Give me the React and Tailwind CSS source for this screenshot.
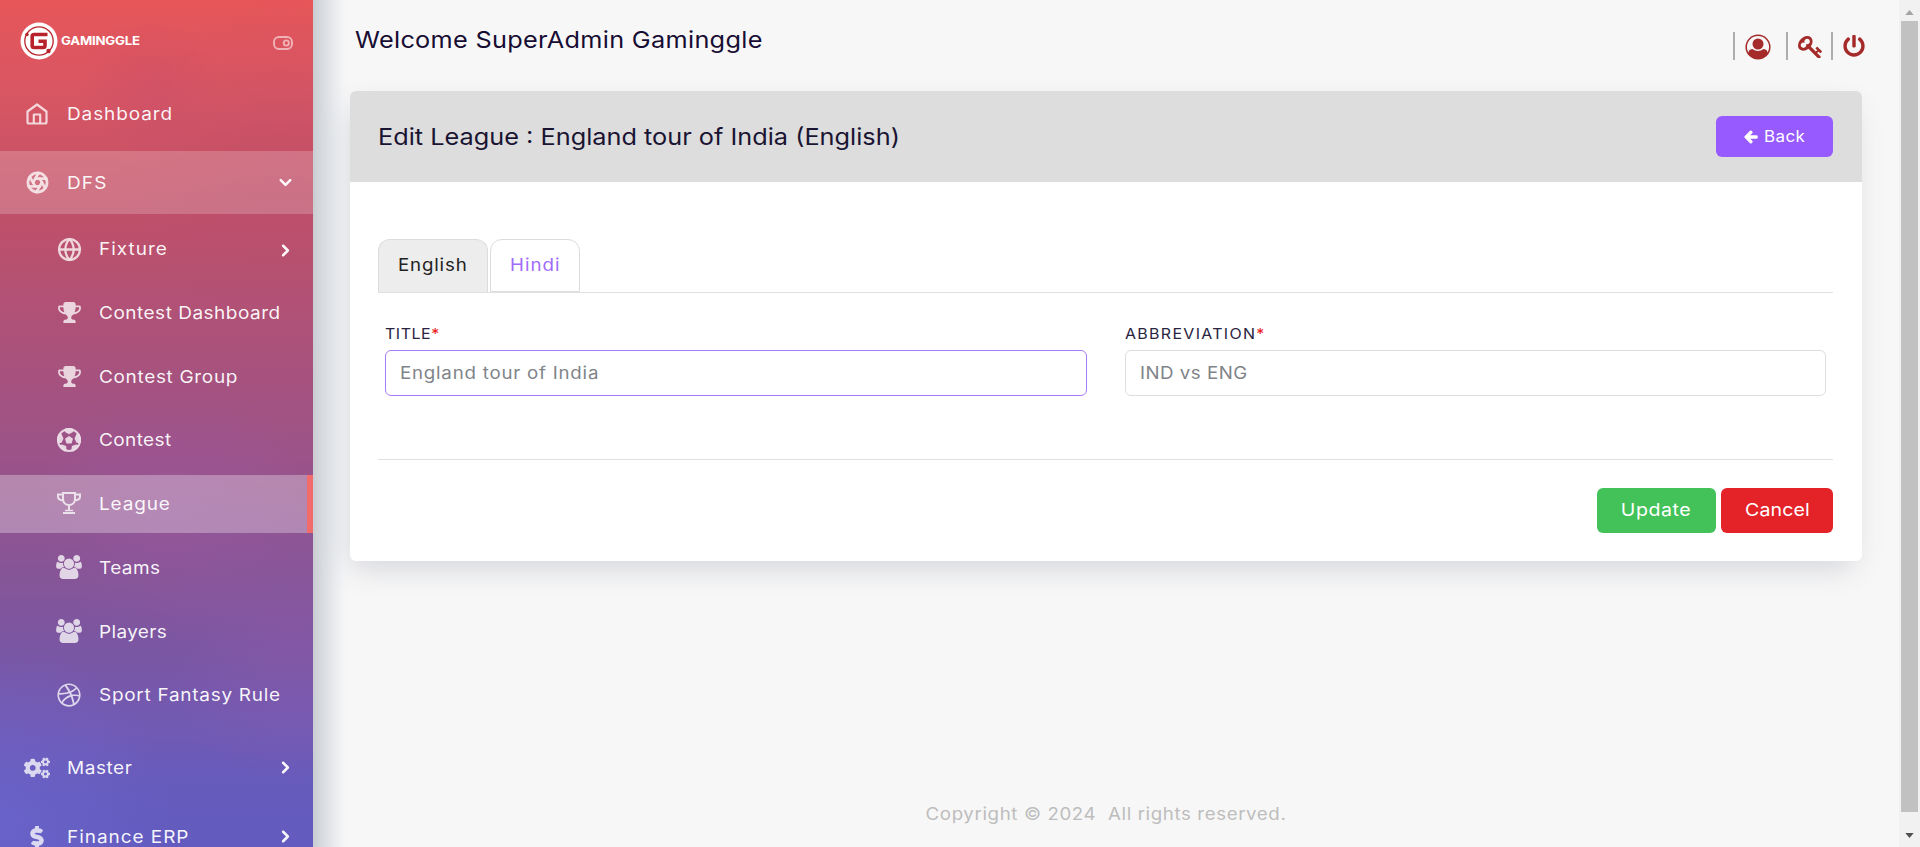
import React from "react";
import { FiAperture, FiGlobe, FiChevronDown, FiChevronRight } from "react-icons/fi";
import { FaCogs, FaDollarSign, FaDribbble, FaPowerOff, FaArrowLeft } from "react-icons/fa";

const wide = "inline-block origin-left scale-x-110 whitespace-nowrap";

function Glyph({ d, box, className }) {
  return (
    <svg viewBox={box} className={className} fill="currentColor">
      <g transform="scale(1,-1)">
        <path d={d} />
      </g>
    </svg>
  );
}

const USERS =
  "M593 640q-162 -5 -265 -128h-134q-82 0 -138 40.5t-56 118.5q0 353 124 353q6 0 43.5 -21t97.5 -42.5t119 -21.5q67 0 133 23q-5 -37 -5 -66q0 -139 81 -256zM1664 3q0 -120 -73 -189.5t-194 -69.5h-874q-121 0 -194 69.5t-73 189.5q0 53 3.5 103.5t14 109t26.5 108.5t43 97.5t62 81t85.5 53.5t111.5 20q10 0 43 -21.5t73 -48t107 -48t135 -21.5t135 21.5t107 48t73 48t43 21.5q61 0 111.5 -20t85.5 -53.5t62 -81t43 -97.5t26.5 -108.5t14 -109t3.5 -103.5zM640 1280q0 -106 -75 -181t-181 -75t-181 75t-75 181t75 181t181 75t181 -75t75 -181zM1344 896q0 -159 -112.5 -271.5t-271.5 -112.5t-271.5 112.5t-112.5 271.5t112.5 271.5t271.5 112.5t271.5 -112.5t112.5 -271.5zM1920 671q0 -78 -56 -118.5t-138 -40.5h-134q-103 123 -265 128q81 117 81 256q0 29 -5 66q66 -23 133 -23q59 0 119 21.5t97.5 42.5t43.5 21q124 0 124 -353zM1792 1280q0 -106 -75 -181t-181 -75t-181 75t-75 181t75 181t181 75t181 -75t75 -181z";
const TROPHY =
  "M458 653q-74 162 -74 371h-256v-96q0 -78 94.5 -162t235.5 -113zM1536 928v96h-256q0 -209 -74 -371q141 29 235.5 113t94.5 162zM1664 1056v-128q0 -71 -41.5 -143t-112 -130t-173 -97.5t-215.5 -44.5q-42 -54 -95 -95q-38 -34 -52.5 -72.5t-14.5 -89.5q0 -54 30.5 -91t97.5 -37q75 0 133.5 -45.5t58.5 -114.5v-64q0 -14 -9 -23t-23 -9h-832q-14 0 -23 9t-9 23v64q0 69 58.5 114.5t133.5 45.5q67 0 97.5 37t30.5 91q0 51 -14.5 89.5t-52.5 72.5q-53 41 -95 95q-113 5 -215.5 44.5t-173 97.5t-112 130t-41.5 143v128q0 40 28 68t68 28h288v96q0 66 47 113t113 47h576q66 0 113 -47t47 -113v-96h288q40 0 68 -28t28 -68z";
const KEY =
  "M832 1024q0 80 -56 136t-136 56t-136 -56t-56 -136q0 -42 19 -83q-41 19 -83 19q-80 0 -136 -56t-56 -136t56 -136t136 -56t136 56t56 136q0 42 -19 83q41 -19 83 -19q80 0 136 56t56 136zM1683 320q0 -17 -49 -66t-66 -49q-9 0 -28.5 16t-36.5 33t-38.5 40t-24.5 26l-96 -96l220 -220q28 -28 28 -68q0 -42 -39 -81t-81 -39q-40 0 -68 28l-671 671q-176 -131 -365 -131q-163 0 -265.5 102.5t-102.5 265.5q0 160 95 313t248 248t313 95q163 0 265.5 -102.5t102.5 -265.5q0 -189 -131 -365l355 -355l96 96q-3 3 -26 24.5t-40 38.5t-33 36.5t-16 28.5q0 17 49 66t66 49q13 0 23 -10q6 -6 46 -44.5t82 -79.5t86.5 -86t73 -78t28.5 -41z";

const TrophySolid = () => <Glyph d={TROPHY} box="0 -1408 1664 1536" className="h-[21px] w-[23px]" />;
const Users = () => <Glyph d={USERS} box="0 -1536 1920 1792" className="h-6 w-[26px] -translate-y-px" />;

const TrophyOutline = () => (
  <svg viewBox="0 0 24 22" className="h-[22px] w-6 -translate-y-px" fill="none" stroke="currentColor" strokeWidth="2">
    <path d="M6 1h12v5.500c0 4-2.500 6.500-6 6.500s-6-2.500-6-6.500zM6 2.500H1v2c0 2.200 2 3.800 5.300 4M18 2.500h5v2c0 2.200-2 3.800-5.300 4M12 13v5" />
    <path d="M8 18.500h8" strokeWidth="1.500" />
    <path d="M6 21h12" />
  </svg>
);

const Ball = () => (
  <svg viewBox="0 0 24 24" className="size-6" fill="currentColor">
    <defs>
      <clipPath id="ball">
        <circle cx="12" cy="12" r="12" />
      </clipPath>
    </defs>
    <circle cx="12" cy="12" r="11" fill="none" stroke="currentColor" strokeWidth="2" />
    <path d="M12 8l4 2.800-1.500 4.600h-5L8 10.800z" />
    <g clipPath="url(#ball)">
      <path d="M6.500 0h11l-1.500 4L12 6.200 8 4zM24 5.500v10l-4.500-.7-2-4.200 2-4.600zM0 5.500v10l4.500-.7 2-4.200-2-4.600zM14.300 23l.6-5 4.100-1.500 4 1-5 7zM9.700 23l-.6-5L5 16.500l-4 1 5 7z" />
    </g>
  </svg>
);

const Home = () => (
  <svg viewBox="0 0 22 22" className="size-[22px]" fill="none" stroke="currentColor" strokeWidth="2.200" strokeLinejoin="round">
    <path d="M1.500 8.500L11 1.500l9.500 7V19a1.500 1.500 0 0 1-1.500 1.500H3A1.500 1.500 0 0 1 1.500 19z" />
    <path d="M7.800 20.500v-9h6.400v9" />
  </svg>
);

const subItems = [
  { label: "Fixture", track: "tracking-[0.9px]", icon: <FiGlobe size={25} strokeWidth={2.2} />, more: true },
  { label: "Contest Dashboard", track: "tracking-[0.45px]", icon: <TrophySolid /> },
  { label: "Contest Group", track: "tracking-[0.6px]", icon: <TrophySolid /> },
  { label: "Contest", track: "tracking-[0.34px]", icon: <Ball /> },
  { label: "League", track: "tracking-[0.75px]", icon: <TrophyOutline />, active: true },
  { label: "Teams", track: "tracking-[0.36px]", icon: <Users /> },
  { label: "Players", track: "tracking-[0.3px]", icon: <Users /> },
  { label: "Sport Fantasy Rule", track: "tracking-[0.64px]", icon: <FaDribbble size={24} /> },
];

function TopItem({ icon, label, track, className, arrow }) {
  return (
    <div className={`flex shrink-0 items-center pr-4 pl-[23px] ${className}`}>
      <span className="flex w-7 justify-center opacity-80">{icon}</span>
      <span className={`ml-4 ${wide} ${track}`}>{label}</span>
      <span className="ml-auto flex w-6 justify-center">{arrow}</span>
    </div>
  );
}

function Sidebar() {
  return (
    <aside className="relative z-10 flex h-full w-[313px] shrink-0 flex-col overflow-hidden bg-[radial-gradient(circle_at_48%_10%,rgba(190,70,110,0.25),transparent_9%),radial-gradient(circle_at_90%_19%,rgba(170,70,110,0.2),transparent_22%),radial-gradient(circle_at_55%_60%,rgba(160,90,170,0.3),transparent_25%),radial-gradient(circle_at_95%_76%,rgba(150,90,170,0.3),transparent_20%),radial-gradient(circle_at_0%_97%,rgba(110,105,210,0.5),transparent_20%),linear-gradient(180deg,#e65659_0%,#d85663_11%,#c35067_23%,#b65171_32%,#a7527e_44%,#9b5389_54%,#8a5594_65%,#7b56a2_76%,#715ab4_86%,#645bbd_94%,#635bbf_100%)] text-[17.3px] leading-6 text-white/95">
      <div className="flex h-[81px] shrink-0 items-center pl-5 pr-5">
        <svg viewBox="0 0 38 38" className="size-[38px]">
          <circle cx="19" cy="19" r="18.500" fill="#fff" />
          <circle cx="19" cy="19" r="14.200" fill="none" stroke="#b8232b" strokeWidth="1.300" />
          <circle cx="7" cy="12.500" r="1.700" fill="#b8232b" />
          <circle cx="28.500" cy="29" r="2.200" fill="#b8232b" />
          <path d="M27.500 12.500H14q-1.800 0-1.800 1.800v9.400q0 1.800 1.800 1.800h9.200q1.800 0 1.800-1.800v-4.500h-6.500" fill="none" stroke="#b8232b" strokeWidth="3.600" />
        </svg>
        <span className="ml-[3px] inline-block origin-left scale-x-110 text-[12px] leading-4 font-bold tracking-[-0.2px] text-white">GAMINGGLE</span>
        <svg viewBox="0 0 20 14" className="mt-[5px] ml-auto h-3.5 w-5 opacity-55" fill="none" stroke="#fff" strokeWidth="1.900">
          <rect x="1" y="1" width="18" height="12" rx="5" />
          <circle cx="13.300" cy="7" r="2.600" />
        </svg>
      </div>
      <TopItem className="mt-px h-[63px]" icon={<Home />} label="Dashboard" track="tracking-[0.8px]" />
      <TopItem
        className="mt-[6px] h-[63px] bg-white/20"
        icon={<FiAperture size={23} strokeWidth={2.8} />}
        label="DFS"
        track="tracking-[1px]"
        arrow={<FiChevronDown size={19} strokeWidth={3.2} />}
      />
      <ul className="mt-1.5 flex shrink-0 flex-col gap-[5.75px]">
        {subItems.map((it) => (
          <li
            key={it.label}
            className={`flex h-[58px] items-center pl-[54px] ${it.active ? "border-r-[6px] border-[#f36c6c] bg-white/30" : "pr-4"}`}
          >
            <span className="flex w-[30px] shrink-0 justify-center opacity-80">{it.icon}</span>
            <span className={`ml-[15px] ${wide} ${it.track}`}>{it.label}</span>
            {it.more && (
              <span className="ml-auto flex w-6 justify-center pt-[3px]">
                <FiChevronRight size={19} strokeWidth={3.2} />
              </span>
            )}
          </li>
        ))}
      </ul>
      <TopItem
        className="mt-3 h-[63px]"
        icon={<FaCogs size={26} />}
        label="Master"
        track="tracking-[0.5px]"
        arrow={<FiChevronRight size={19} strokeWidth={3.2} />}
      />
      <TopItem
        className="mt-[6px] h-[63px]"
        icon={<FaDollarSign size={22} stroke="currentColor" strokeWidth={24} />}
        label="Finance ERP"
        track="tracking-[0.86px]"
        arrow={<FiChevronRight size={19} strokeWidth={3.2} />}
      />
    </aside>
  );
}

function Header() {
  return (
    <header className="flex h-[91px] shrink-0 justify-between pr-[34px] pl-[5px]">
      <h1 className={`mt-[26px] text-[23px] leading-7 tracking-[0.26px] text-[#170d33] ${wide}`}>Welcome SuperAdmin Gaminggle</h1>
      <div className="mt-8 flex h-7 items-center text-[#a52a2a]">
        <span className="h-7 w-0.5 bg-[#adadb0]" />
        <svg viewBox="0 0 26 26" className="ml-[10px] mt-px size-[26px]">
          <defs>
            <clipPath id="avatar">
              <circle cx="13" cy="13" r="12" />
            </clipPath>
          </defs>
          <circle cx="13" cy="13" r="11.800" fill="none" stroke="currentColor" strokeWidth="1.500" />
          <circle cx="13" cy="10" r="5.500" fill="currentColor" />
          <path clipPath="url(#avatar)" d="M3 21c0-4 1.500-6 4.500-6 3 2.500 8 2.500 11 0 3 0 4.500 2 4.500 6l-4 5H7z" fill="currentColor" />
        </svg>
        <span className="ml-[15px] h-7 w-0.5 bg-[#adadb0]" />
        <Glyph d={KEY} box="0 -1408 1683 1536" className="mt-0.5 ml-[10px] h-[22px] w-6" />
        <span className="ml-[9px] h-7 w-0.5 bg-[#adadb0]" />
        <FaPowerOff size={22} className="ml-[10px]" />
      </div>
    </header>
  );
}

function Field({ label, labelTrack, value, valueTrack, focused }) {
  return (
    <div className="flex flex-1 flex-col">
      <label className="flex h-6 items-center pt-0.5 text-[14.500px] leading-5 text-[#2a2440]">
        <span className={`${wide} ${labelTrack}`}>
          {label}
          <span className="text-[#e92020]">*</span>
        </span>
      </label>
      <div
        className={`mt-[5px] flex h-[46px] items-center rounded-md border bg-white pt-0.5 pl-3.5 text-[17px] text-[#808488] ${
          focused ? "border-[#ab7bf5]" : "border-[#dcdee0]"
        }`}
      >
        <span className={`${wide} ${valueTrack}`}>{value}</span>
      </div>
    </div>
  );
}

function Card() {
  return (
    <section className="h-[470px] w-[1512px] rounded-md bg-white shadow-[-4px_12px_28px_-6px_rgba(90,97,125,0.24)]">
      <div className="flex h-[91px] items-center justify-between rounded-t-md bg-[#dddddd] pr-[29px] pl-7">
        <h2 className={`text-[23px] leading-7 text-[#1a1433] ${wide}`}>Edit League : England tour of India (English)</h2>
        <button className="flex h-[41px] w-[117px] items-center justify-center rounded-md bg-[#975aff] text-[15.400px] text-white">
          <FaArrowLeft size={14} stroke="currentColor" strokeWidth={40} className="overflow-visible" />
          <span className={`mr-1 ml-1.5 tracking-[0.4px] ${wide}`}>Back</span>
        </button>
      </div>
      <div className="pt-[57px] pr-[29px] pl-7">
        <div className="flex gap-0.5 border-b border-[#dee0e3] text-[17px]">
          <div className="flex h-[53px] w-[110px] items-center rounded-t-[12px] border border-b-0 border-[#dcdcdc] bg-[#ededed] pl-[19px] text-[#222]">
            <span className={`tracking-[0.75px] ${wide}`}>English</span>
          </div>
          <div className="flex h-[53px] w-[90px] items-center rounded-t-[12px] border border-[#dcdcdc] pl-[19px] text-[#a16bfa]">
            <span className={`tracking-[0.9px] ${wide}`}>Hindi</span>
          </div>
        </div>
        <div className="flex gap-[38px] px-[7px] pt-7">
          <Field label="TITLE" labelTrack="tracking-[0.5px]" value="England tour of India" valueTrack="tracking-[0.7px]" focused />
          <Field label="ABBREVIATION" labelTrack="tracking-[1.2px]" value="IND vs ENG" valueTrack="tracking-[0.45px]" />
        </div>
        <hr className="mt-[63px] border-[#dee0e3]" />
        <div className="mt-7 flex justify-end gap-[5px] text-[17.800px] text-white">
          <button className="h-[45px] w-[119px] rounded-md bg-[#43c259]">
            <span className="inline-block scale-x-110 tracking-[0.5px]">Update</span>
          </button>
          <button className="h-[45px] w-28 rounded-md bg-[#e42328]">
            <span className="inline-block scale-x-110 tracking-[0.1px]">Cancel</span>
          </button>
        </div>
      </div>
    </section>
  );
}

function Scrollbar() {
  return (
    <div className="flex h-full w-[21px] shrink-0 flex-col items-center bg-[#f1f1f1]">
      <div className="flex h-[21px] shrink-0 items-center">
        <svg viewBox="0 0 10 6" className="mt-1 h-[5px] w-[9px]">
          <path d="M5 0l5 6H0z" fill="#a3a3a3" />
        </svg>
      </div>
      <div className="h-[791px] w-[17px] shrink-0 bg-[#c1c1c1]" />
      <div className="flex flex-1 items-center">
        <svg viewBox="0 0 10 6" className="mt-3 h-[5px] w-[9px]">
          <path d="M0 0h10L5 6z" fill="#505050" />
        </svg>
      </div>
    </div>
  );
}

export default function App() {
  return (
    <div className="flex h-[847px] w-[1920px] overflow-hidden bg-[#f7f7f7] font-['Inter',sans-serif]">
      <Sidebar />
      <div className="w-[37px] shrink-0 bg-[linear-gradient(90deg,#c9cdd2_0%,#d9dce0_28%,#e9ebee_58%,#f4f5f6_82%,#f7f7f7_100%)]" />
      <main className="flex h-full flex-1 flex-col">
        <Header />
        <Card />
        <footer className="mt-[241px] flex w-[1512px] justify-center text-[17px] leading-6 text-[#bdbdbd]">
          <span className="inline-block scale-x-110 tracking-[0.55px] whitespace-pre">{"Copyright © 2024  All rights reserved."}</span>
        </footer>
      </main>
      <Scrollbar />
    </div>
  );
}
